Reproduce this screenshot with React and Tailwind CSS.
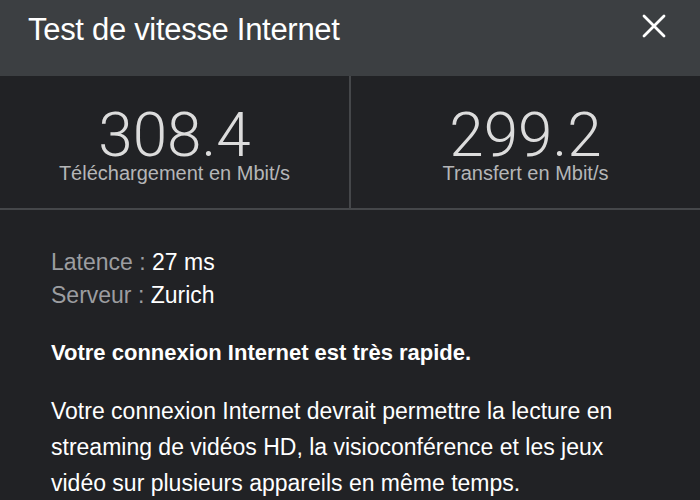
export default function App() {
  return (
    <div className="w-[700px] h-[500px] overflow-hidden bg-[#212225] font-['Liberation_Sans',Arial,sans-serif]">
      {/* En-tête */}
      <div className="h-[76px] bg-[#3c3f42] flex items-start justify-between pl-[28px] pr-[34px] pt-[10px]">
        <h1 className="text-[31px] leading-[40px] text-white tracking-[-0.3px]">Test de vitesse Internet</h1>
        <button className="mt-[4px] text-white">
          <svg width="24" height="24" viewBox="0 0 24 24" fill="none" stroke="currentColor"
            strokeWidth="2.8" strokeLinecap="round">
            <path d="M2 2 22 22M22 2 2 22" />
          </svg>
        </button>
      </div>

      {/* Débits */}
      <div className="grid grid-cols-[349px_2px_1fr] h-[134px] border-b-2 border-[#45474a]">
        <Mesure valeur="308.4" label="Téléchargement en Mbit/s" />
        <div className="bg-[#45474a]" />
        <Mesure valeur="299.2" label="Transfert en Mbit/s" />
      </div>

      {/* Détails */}
      <div className="pl-[51px] pr-[60px] pt-[36px]">
        <p className="text-[23px] leading-[33px] text-[#9c9da0]">
          Latence : <span className="text-white">27 ms</span>
        </p>
        <p className="text-[23px] leading-[33px] text-[#9c9da0]">
          Serveur : <span className="text-white">Zurich</span>
        </p>
        <p className="mt-[26px] text-[22px] leading-[30px] font-bold text-white">
          Votre connexion Internet est très rapide.
        </p>
        <p className="mt-[25px] text-[23px] leading-[36px] text-white">
          Votre connexion Internet devrait permettre la lecture en streaming de vidéos HD,
          la visioconférence et les jeux vidéo sur plusieurs appareils en même temps.
        </p>
      </div>
    </div>
  );
}

function Mesure({ valeur, label }) {
  return (
    <div className="flex flex-col items-center pt-[35px]">
      <p className="font-['Roboto',sans-serif] font-light text-[62px] leading-[48px] text-[#dcdcdc]">{valeur}</p>
      <p className="mt-[2px] text-[20px] leading-[24px] text-[#b5b6b8]">{label}</p>
    </div>
  );
}
